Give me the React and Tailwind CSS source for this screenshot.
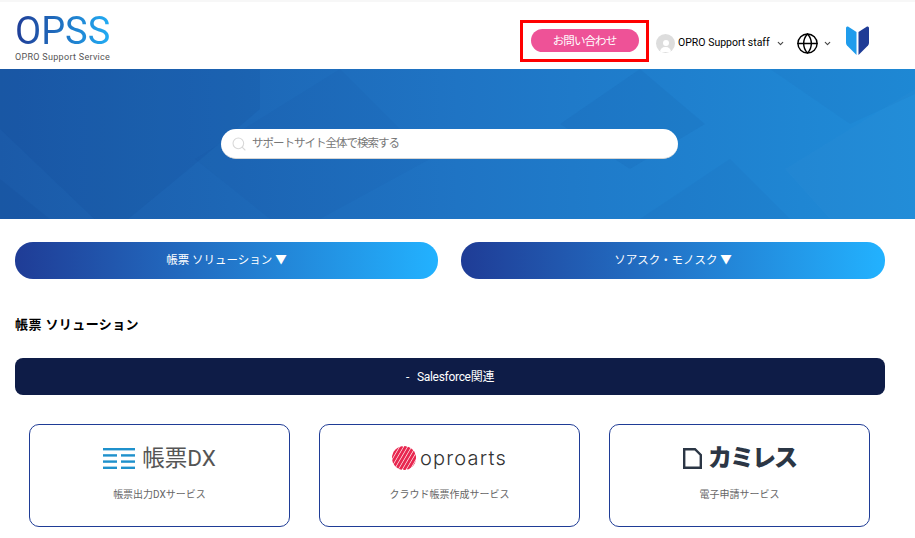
import React from 'react';
import { ChevronDown, Globe, Search } from 'lucide-react';

const fontStack = "font-['Roboto','Noto_Sans_CJK_JP',sans-serif]";

const SiteLogo = () => (
  <div className="flex flex-col w-[96px] pt-[3px]">
    <div className="text-[38px] leading-[38px] font-normal whitespace-nowrap font-['Roboto',sans-serif] bg-gradient-to-r from-[#1f3c96] via-[#1f74c4] to-[#22aef5] bg-clip-text text-transparent">
      OPSS
    </div>
    <div className="text-[9px] leading-[12px] mt-[1px] text-[#555] tracking-[0.3px] whitespace-nowrap">OPRO Support Service</div>
  </div>
);

const BookmarkMark = () => (
  <svg width="23" height="29" viewBox="0 0 23 29">
    <path d="M2 0.5 L10.5 6 V29 L1 19.5 Q0 18.5 0 16.5 V2 Q0 0 2 0.5 Z" fill="#1f9cec" />
    <path d="M21 0.5 L12.5 6 V29 L22 19.5 Q23 18.5 23 16.5 V2 Q23 0 21 0.5 Z" fill="#1f3c96" />
  </svg>
);

const Header = () => (
  <header className="h-[69px] bg-white border-t-2 border-[#f7f7f7] flex items-center pl-[15px]">
    <SiteLogo />
    <div className="ml-[409px] w-[129px] h-[42px] mt-[10px] border-[3px] border-[#ff0000] flex items-center justify-center shrink-0">
      <div className="w-[108px] h-[23px] rounded-full bg-[#ee5297] text-white text-[11.5px] tracking-[-0.9px] leading-[24px] text-center">お問い合わせ</div>
    </div>
    <div className="flex items-center ml-[7px] mt-[15px]">
      <div className="w-[19px] h-[19px] rounded-full bg-[#dddddd] flex flex-col items-center justify-end overflow-hidden">
        <div className="w-[6px] h-[6px] rounded-full bg-white mb-[1px]" />
        <div className="w-[11px] h-[5px] rounded-t-full bg-white mb-[1px]" />
      </div>
      <span className="ml-[3px] text-[10.5px] text-black whitespace-nowrap">OPRO Support staff</span>
      <ChevronDown size={9} strokeWidth={3} className="ml-[6px] text-[#444]" />
      <Globe size={23} strokeWidth={1.5} className="ml-[11px] text-black" />
      <ChevronDown size={9} strokeWidth={3} className="ml-[4px] text-[#444]" />
      <div className="ml-[14px] mt-[-6px]">
        <BookmarkMark />
      </div>
    </div>
  </header>
);

const HeroPattern = () => (
  <svg className="absolute inset-0 w-full h-full" viewBox="0 0 915 150" preserveAspectRatio="none">
    <path d="M0 0 H260 V40 L195 95 L110 165 L0 60 Z" fill="#123f88" opacity="0.12" />
    <path d="M0 110 L50 150 H0 Z" fill="#123f88" opacity="0.12" />
    <path d="M195 90 L340 0 L430 90 L320 150 H270 Z" fill="#123f88" opacity="0.04" />
    <path d="M560 55 L640 0 L705 55 L630 100 Z" fill="#123f88" opacity="0.08" />
    <path d="M785 100 L915 20 V150 H830 Z" fill="#ffffff" opacity="0.015" />
    <path d="M640 150 L730 90 L790 150 Z" fill="#123f88" opacity="0.05" />
    <path d="M770 0 H915 V25 L850 55 Z" fill="#123f88" opacity="0.04" />
  </svg>
);

const Hero = () => (
  <section className="relative h-[150px] bg-gradient-to-r from-[#1b5aa8] via-[#1f74c4] to-[#1f8cd8] flex items-start justify-center overflow-hidden">
    <HeroPattern />
    <div className="relative ml-[-16px] mt-[60px] w-[457px] h-[30px] bg-white rounded-full border-b border-[#d5d5d5] flex items-center pl-[10px]">
      <Search size={16} strokeWidth={1.6} className="text-[#d8d8d8]" />
      <span className="ml-[5px] pt-[1px] text-[11.5px] tracking-[-1px] text-[#777]">サポートサイト全体で検索する</span>
    </div>
  </section>
);

const GradientButton = ({ label, className }) => (
  <div className={`${className} h-[37px] pt-[1px] rounded-[18px] bg-gradient-to-r from-[#1f3c96] to-[#22b2ff] text-white text-[11.5px] flex items-center justify-center`}>
    {label}
  </div>
);

const ServiceCard = ({ logo, caption }) => (
  <div className="w-[261px] h-[103px] rounded-[10px] border border-[#1f3c96] flex flex-col items-center">
    <div className="h-[42px] mt-[12px] flex items-center justify-center">{logo}</div>
    <div className="mt-[8px] text-[10px] leading-[16px] text-[#666]">{caption}</div>
  </div>
);

const ChohyoLogo = () => (
  <div className="flex items-center">
    <svg width="32" height="21" viewBox="0 0 32 21">
      <rect x="0" y="0" width="32" height="2.4" fill="#1f91cc" />
      {[6.2, 12.4, 18.6].map((y) => (
        <g key={y} fill="#1f91cc">
          <rect x="0" y={y} width="14" height="2.4" />
          <rect x="18" y={y} width="14" height="2.4" />
        </g>
      ))}
    </svg>
    <span className="ml-[7px] text-[22.5px] leading-[24px] text-[#555]">帳票DX</span>
  </div>
);

const OproartsLogo = () => (
  <div className="flex items-center">
    <svg width="24" height="24" viewBox="0 0 24 24">
      <defs>
        <clipPath id="ball">
          <circle cx="12" cy="12" r="12" />
        </clipPath>
      </defs>
      <g clipPath="url(#ball)" stroke="#e8274f" strokeWidth="2.8">
        {[-12, -8, -4, 0, 4, 8, 12, 16, 20, 24, 28, 32, 36].map((o) => (
          <line key={o} x1={o} y1="24" x2={o + 14} y2="0" />
        ))}
      </g>
    </svg>
    <span className="ml-[4px] text-[20px] leading-[24px] text-[#333] tracking-[1.2px] font-['Inter',sans-serif] font-light">oproarts</span>
  </div>
);

const KamilessLogo = () => (
  <div className="flex items-center">
    <svg width="19" height="21" viewBox="0 0 19 21">
      <path d="M1.2 1.2 H12 L17.8 7 V19.8 H1.2 Z" fill="none" stroke="#2b3645" strokeWidth="2.4" />
    </svg>
    <span className="ml-[6px] text-[24px] leading-[26px] text-[#2b3645] font-black tracking-[-2px]">カミレス</span>
  </div>
);

export default function App() {
  return (
    <div className={`${fontStack} w-[915px] h-[538px] overflow-hidden bg-white`}>
      <Header />
      <Hero />
      <main className="pl-[15px] pr-[30px]">
        <div className="flex gap-[23px] pt-[23px]">
          <GradientButton className="w-[423px]" label="帳票 ソリューション ▼" />
          <GradientButton className="w-[424px]" label="ソアスク・モノスク ▼" />
        </div>
        <h2 className="mt-[36px] text-[13px] leading-[19px] tracking-[0.4px] font-bold text-black">帳票 ソリューション</h2>
        <div className="mt-[24px] h-[37px] rounded-[8px] bg-[#0e1c47] text-white text-[12px] tracking-[-0.3px] flex items-center justify-center">
          -&nbsp;&nbsp; Salesforce関連
        </div>
        <div className="mt-[29px] ml-[14px] flex gap-[29px]">
          <ServiceCard logo={<ChohyoLogo />} caption="帳票出力DXサービス" />
          <ServiceCard logo={<OproartsLogo />} caption="クラウド帳票作成サービス" />
          <ServiceCard logo={<KamilessLogo />} caption="電子申請サービス" />
        </div>
      </main>
    </div>
  );
}
